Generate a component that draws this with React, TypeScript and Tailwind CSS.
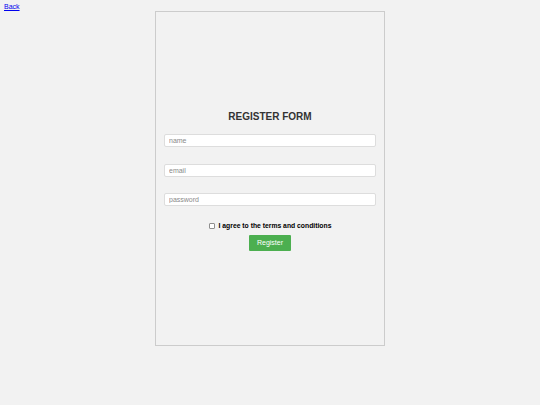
import React from 'react';

const App: React.FC = () => {
  return (
    <div className="min-h-[405px] bg-[#f2f2f2] font-['Liberation_Sans',Arial,sans-serif]">
      <div className="h-[11px] pl-[4px] pt-[3px] text-[7px] leading-[8px]">
        <a href="#" className="text-[#0000ee] underline">Back</a>
      </div>

      <div className="mx-auto flex h-[335px] w-[230px] flex-col items-center border border-[#cccccc] pt-[99px]">
        <h2 className="text-[10px] font-bold leading-[12px] text-[#333333]">REGISTER FORM</h2>

        <input
          type="text"
          placeholder="name"
          className="mt-[11px] h-[13px] w-[212px] rounded-[2px] border border-[#dddddd] bg-white px-[4px] text-[7px] text-[#333] outline-none placeholder:text-[#8a8a8a]"
        />
        <input
          type="email"
          placeholder="email"
          className="mt-[17px] h-[13px] w-[212px] rounded-[2px] border border-[#dddddd] bg-white px-[4px] text-[7px] text-[#333] outline-none placeholder:text-[#8a8a8a]"
        />
        <input
          type="password"
          placeholder="password"
          className="mt-[16px] h-[13px] w-[212px] rounded-[2px] border border-[#dddddd] bg-white px-[4px] text-[7px] text-[#333] outline-none placeholder:text-[#8a8a8a]"
        />

        <label className="mt-[15px] flex items-center gap-[4px] text-[6.8px] font-bold leading-[9px] text-black">
          <input
            type="checkbox"
            className="m-0 h-[6px] w-[6px] appearance-none rounded-[1px] border border-[#8f8f8f] bg-white"
          />
          I agree to the terms and conditions
        </label>

        <button className="mt-[5px] h-[16px] w-[42px] rounded-[1px] bg-[#4caf50] text-[7px] text-white">
          Register
        </button>
      </div>
    </div>
  );
};

export default App;
